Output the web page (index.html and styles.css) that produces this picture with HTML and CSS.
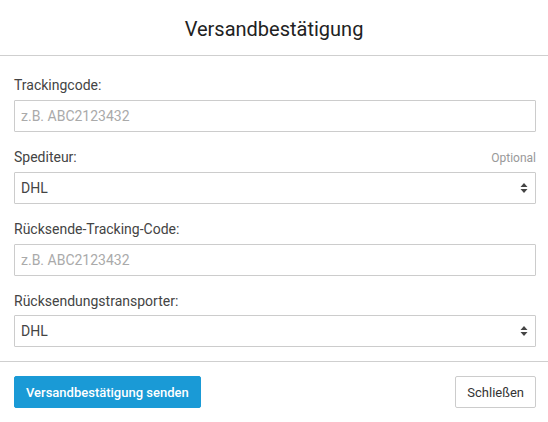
FILE: index.html
```html
<html>
  <head>
    <title>Versandbestätigung</title>
    <link rel="stylesheet" href="styles.css">
  </head>
<body>
  <div class="modal">
    <div class="modal-header">
      <h1>Versandbestätigung</h1>
    </div>

    <form class="modal-body">
      <div class="form-group">
        <label for="tracking">Trackingcode:</label>
        <input type="text" id="tracking" placeholder="z.B. ABC2123432">
      </div>

      <div class="form-group">
        <div class="label-row">
          <label for="carrier">Spediteur:</label>
          <span class="optional">Optional</span>
        </div>
        <div class="select-wrap">
          <select id="carrier">
            <option>DHL</option>
          </select>
          <svg class="caret" width="8" height="12" viewBox="0 0 8 12"><path d="M4 1L7.5 5H0.5Z M4 11L7.5 7H0.5Z" fill="#444"/></svg>
        </div>
      </div>

      <div class="form-group">
        <label for="returnTracking">Rücksende-Tracking-Code:</label>
        <input type="text" id="returnTracking" placeholder="z.B. ABC2123432">
      </div>

      <div class="form-group">
        <label for="returnCarrier">Rücksendungstransporter:</label>
        <div class="select-wrap">
          <select id="returnCarrier">
            <option>DHL</option>
          </select>
          <svg class="caret" width="8" height="12" viewBox="0 0 8 12"><path d="M4 1L7.5 5H0.5Z M4 11L7.5 7H0.5Z" fill="#444"/></svg>
        </div>
      </div>
    </form>

    <div class="modal-footer">
      <button class="btn btn-primary">Versandbestätigung senden</button>
      <button class="btn btn-default">Schließen</button>
    </div>
  </div>
</body>
</html>
```

FILE: styles.css
```css
body {
  margin: 0;
  font-family: Roboto, "Liberation Sans", sans-serif;
  background: #fff;
  color: #444;
}

.modal {
  width: 548px;
}

.modal-header {
  height: 55px;
  border-bottom: 1px solid #cfcfcf;
  display: flex;
  align-items: center;
  justify-content: center;
}

.modal-header h1 {
  margin: 0;
  font-size: 20px;
  font-weight: 400;
  color: #222;
  padding-top: 2px;
}

.modal-body {
  margin: 0;
  padding: 19px 12px 14px 14px;
  border-bottom: 1px solid #cfcfcf;
}

.form-group {
  margin-bottom: 15px;
}

.form-group:last-child {
  margin-bottom: 0;
}

.form-group:last-child label {
  margin-bottom: 4px;
}

label {
  display: block;
  font-size: 14px;
  line-height: 20px;
  color: #444;
  margin-bottom: 5px;
}

.label-row {
  display: flex;
  justify-content: space-between;
  align-items: baseline;
}

.optional {
  font-size: 12px;
  color: #999;
}

input[type="text"],
select {
  display: block;
  width: 100%;
  height: 32px;
  box-sizing: border-box;
  border: 1px solid #ccc;
  border-radius: 1px;
  padding: 0 6px;
  font-family: Roboto, "Liberation Sans", sans-serif;
  font-size: 14px;
  color: #444;
  background: #fff;
}

input::placeholder {
  color: #aaa;
}

select {
  appearance: none;
  -webkit-appearance: none;
}

.select-wrap {
  position: relative;
}

.caret {
  position: absolute;
  right: 8px;
  top: 10px;
}

.modal-footer {
  padding: 14px 12px 14px 14px;
  display: flex;
  justify-content: space-between;
}

.btn {
  height: 32px;
  font-family: Roboto, "Liberation Sans", sans-serif;
  font-size: 13px;
  border-radius: 2px;
  padding: 0 11px;
}

.btn-primary {
  background: #1a9ad6;
  border: 1px solid #1a9ad6;
  color: #fff;
  font-weight: 500;
}

.btn-default {
  background: #fff;
  border: 1px solid #ccc;
  color: #333;
}
```
